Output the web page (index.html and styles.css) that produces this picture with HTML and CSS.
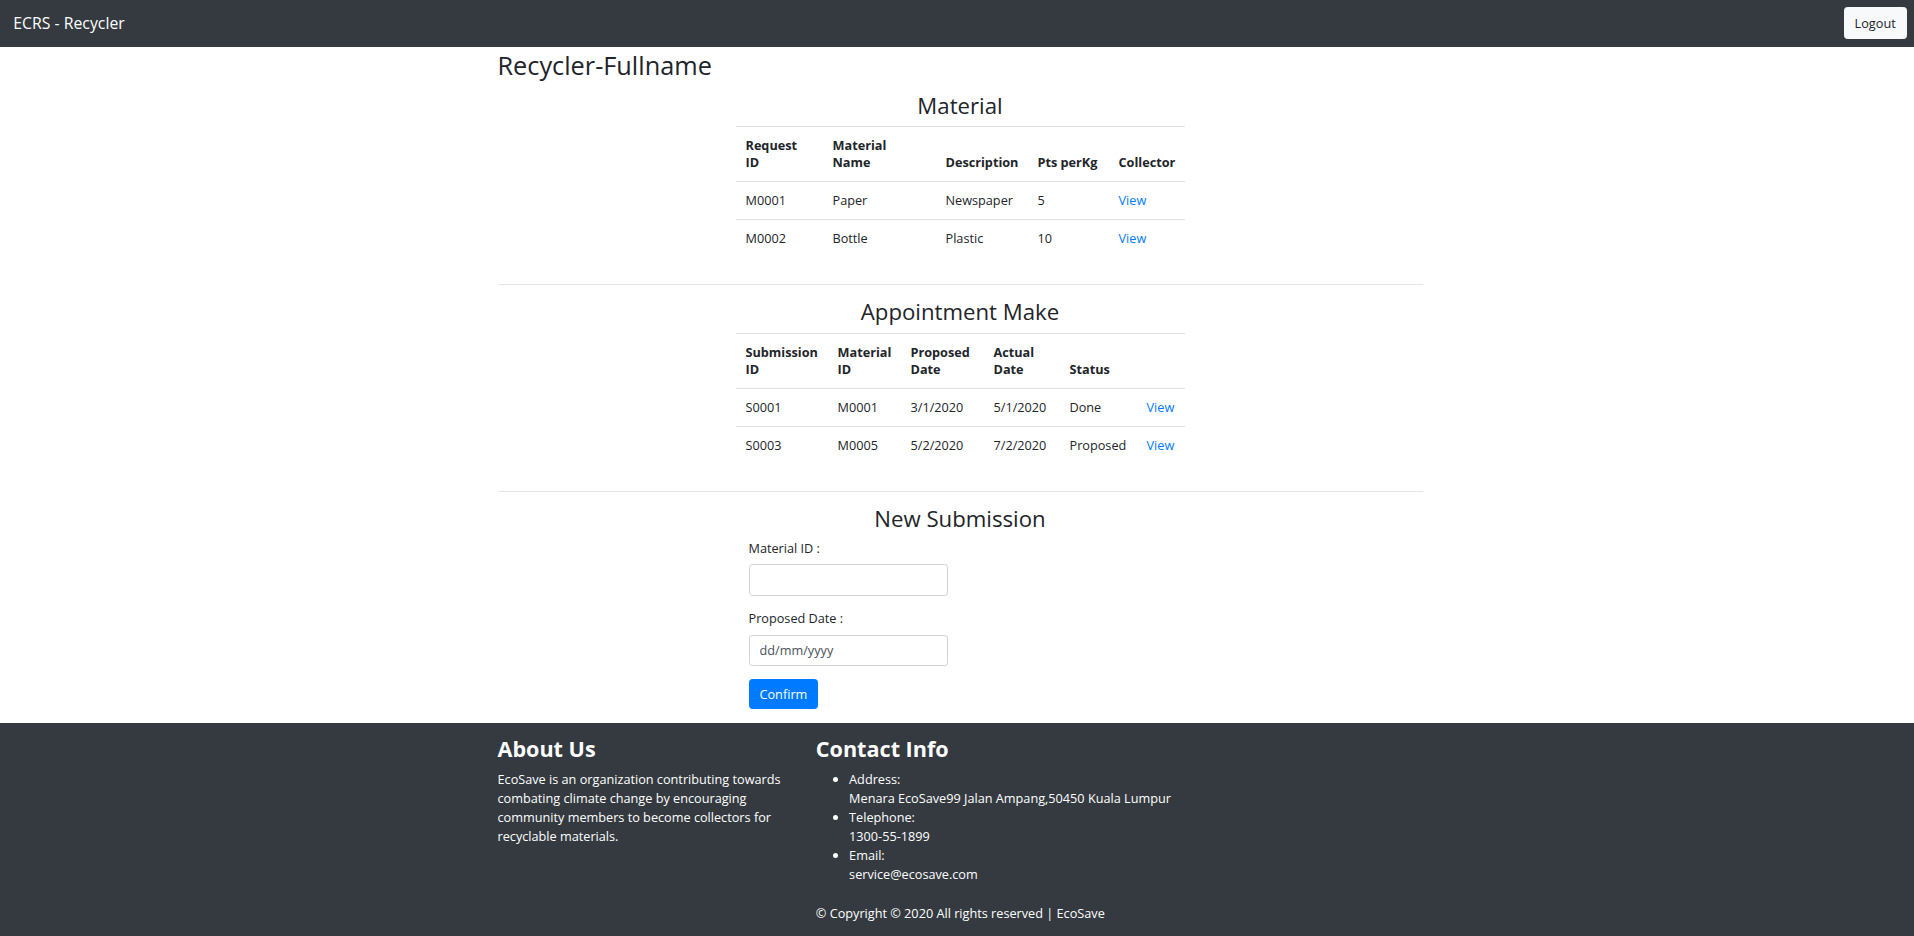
FILE: index.html
```html
<!DOCTYPE html>
<html lang="en">
<head>
<meta charset="utf-8">
<title>ECRS - Recycler</title>
<link rel="stylesheet" href="styles.css">
</head>
<body>
<div class="page">
  <nav class="navbar">
    <span class="brand">ECRS - Recycler</span>
    <button class="btn btn-light" type="button">Logout</button>
  </nav>

  <main class="container">
    <h2 class="page-title">Recycler-Fullname</h2>

    <section class="section">
      <h3 class="section-title">Material</h3>
      <table class="data-table material-table">
        <colgroup>
          <col style="width:87px"><col style="width:113px"><col style="width:92px"><col style="width:81px"><col style="width:76px">
        </colgroup>
        <thead>
          <tr><th>Request<br>ID</th><th>Material<br>Name</th><th>Description</th><th>Pts perKg</th><th>Collector</th></tr>
        </thead>
        <tbody>
          <tr><td>M0001</td><td>Paper</td><td>Newspaper</td><td>5</td><td><a href="#" class="link">View</a></td></tr>
          <tr><td>M0002</td><td>Bottle</td><td>Plastic</td><td>10</td><td><a href="#" class="link">View</a></td></tr>
        </tbody>
      </table>
    </section>

    <hr class="divider">

    <section class="section">
      <h3 class="section-title">Appointment Make</h3>
      <table class="data-table appointment-table">
        <colgroup>
          <col style="width:92px"><col style="width:73px"><col style="width:83px"><col style="width:76px"><col style="width:77px"><col style="width:48px">
        </colgroup>
        <thead>
          <tr><th>Submission<br>ID</th><th>Material<br>ID</th><th>Proposed<br>Date</th><th>Actual<br>Date</th><th>Status</th><th></th></tr>
        </thead>
        <tbody>
          <tr><td>S0001</td><td>M0001</td><td>3/1/2020</td><td>5/1/2020</td><td>Done</td><td><a href="#" class="link">View</a></td></tr>
          <tr><td>S0003</td><td>M0005</td><td>5/2/2020</td><td>7/2/2020</td><td>Proposed</td><td><a href="#" class="link">View</a></td></tr>
        </tbody>
      </table>
    </section>

    <hr class="divider">

    <section class="section">
      <h3 class="section-title">New Submission</h3>
      <form class="submit-form">
        <div class="form-group">
          <label class="form-label" for="mid">Material ID :</label>
          <input class="form-control" id="mid" type="text">
        </div>
        <div class="form-group">
          <label class="form-label" for="pdate">Proposed Date :</label>
          <input class="form-control" id="pdate" type="text" placeholder="dd/mm/yyyy">
        </div>
        <button class="btn btn-primary" type="button">Confirm</button>
      </form>
    </section>
  </main>

  <footer class="footer">
    <div class="footer-inner">
      <div class="footer-col">
        <h3 class="footer-title">About Us</h3>
        <p class="footer-text">EcoSave is an organization contributing towards combating climate change by encouraging community members to become collectors for recyclable materials.</p>
      </div>
      <div class="footer-col">
        <h3 class="footer-title">Contact Info</h3>
        <ul class="contact-list">
          <li>Address:<br>Menara EcoSave99 Jalan Ampang,50450 Kuala Lumpur</li>
          <li>Telephone:<br>1300-55-1899</li>
          <li>Email:<br>service@ecosave.com</li>
        </ul>
      </div>
      <div class="footer-col"></div>
      <p class="copyright">&copy; Copyright &copy; 2020 All rights reserved | EcoSave</p>
    </div>
  </footer>
</div>
</body>
</html>
```

FILE: styles.css
```css
html, body {
  margin: 0;
  padding: 0;
  overflow: hidden;
  background: #ffffff;
}

body {
  font-family: "Open Sans", "Segoe UI", "Liberation Sans", sans-serif;
  font-size: 12.7px;
  line-height: 20px;
  color: #212529;
}

.page {
  width: 1920px;
}

/* Navbar */
.navbar {
  height: 46.7px;
  box-sizing: border-box;
  background: #343a40;
  display: flex;
  align-items: center;
  justify-content: space-between;
  padding: 0 13.3px;
}

.brand {
  color: #ffffff;
  font-size: 15.8px;
  line-height: 25px;
}

.btn {
  font-family: inherit;
  font-size: 12.7px;
  line-height: 20px;
  border-radius: 3.3px;
  padding: 5px 10px;
  cursor: pointer;
}

.btn-light {
  background: #f8f9fa;
  color: #212529;
  border: 1px solid #f8f9fa;
}

.btn-primary {
  background: #007bff;
  color: #ffffff;
  border: 1px solid #007bff;
  line-height: 18px;
}

/* Main */
.container {
  width: 925px;
  margin: 0 auto;
}

.page-title {
  font-size: 25.3px;
  font-weight: 400;
  line-height: 32px;
  margin: 0 0 11px;
  padding-top: 2px;
}

.section {
  display: flex;
  flex-direction: column;
  align-items: center;
}

.section-title {
  font-size: 22.2px;
  font-weight: 400;
  line-height: 28px;
  margin: 0 0 6.7px;
  text-align: center;
}

.data-table {
  border-collapse: collapse;
  table-layout: fixed;
  width: 449px;
  margin-bottom: 13.3px;
}

.data-table th,
.data-table td {
  padding: 10px;
  line-height: 17px;
  text-align: left;
  border-top: 1px solid #dee2e6;
  white-space: nowrap;
}

.data-table th {
  font-weight: 700;
  vertical-align: bottom;
}

.data-table td {
  vertical-align: top;
}

.link {
  color: #007bff;
  text-decoration: none;
}

.divider {
  border: 0;
  border-top: 1px solid rgba(0, 0, 0, 0.1);
  margin: 13.3px 0;
}

/* Form */
.submit-form {
  align-self: flex-start;
  margin: -2px 0 14px 251px;
}

.form-group {
  margin-bottom: 12.5px;
}

.form-label {
  display: block;
  line-height: 20px;
  margin-bottom: 6.7px;
}

.form-control {
  display: block;
  box-sizing: border-box;
  width: 199.4px;
  height: 31.4px;
  padding: 0 10px;
  font-family: inherit;
  font-size: 12.7px;
  color: #495057;
  background: #ffffff;
  border: 1px solid #ced4da;
  border-radius: 3.3px;
}

.form-control::placeholder {
  color: #495057;
}

/* Footer */
.footer {
  background: #343a40;
  color: #ffffff;
  padding: 12.5px 0 16px;
}

.footer-inner {
  width: 925px;
  margin: 0 auto;
  display: grid;
  grid-template-columns: 293.3px 293.3px 1fr;
  column-gap: 25px;
}

.footer-title {
  font-size: 21.6px;
  font-weight: 700;
  line-height: 28px;
  margin: 0 0 7px;
}

.footer-text {
  margin: 0;
  line-height: 19px;
}

.contact-list {
  margin: 0 0 13.3px;
  padding-left: 33.3px;
  line-height: 19px;
  white-space: nowrap;
}

.copyright {
  grid-column: 2 / span 2;
  margin: 7px 0 0;
  line-height: 19px;
}
```
